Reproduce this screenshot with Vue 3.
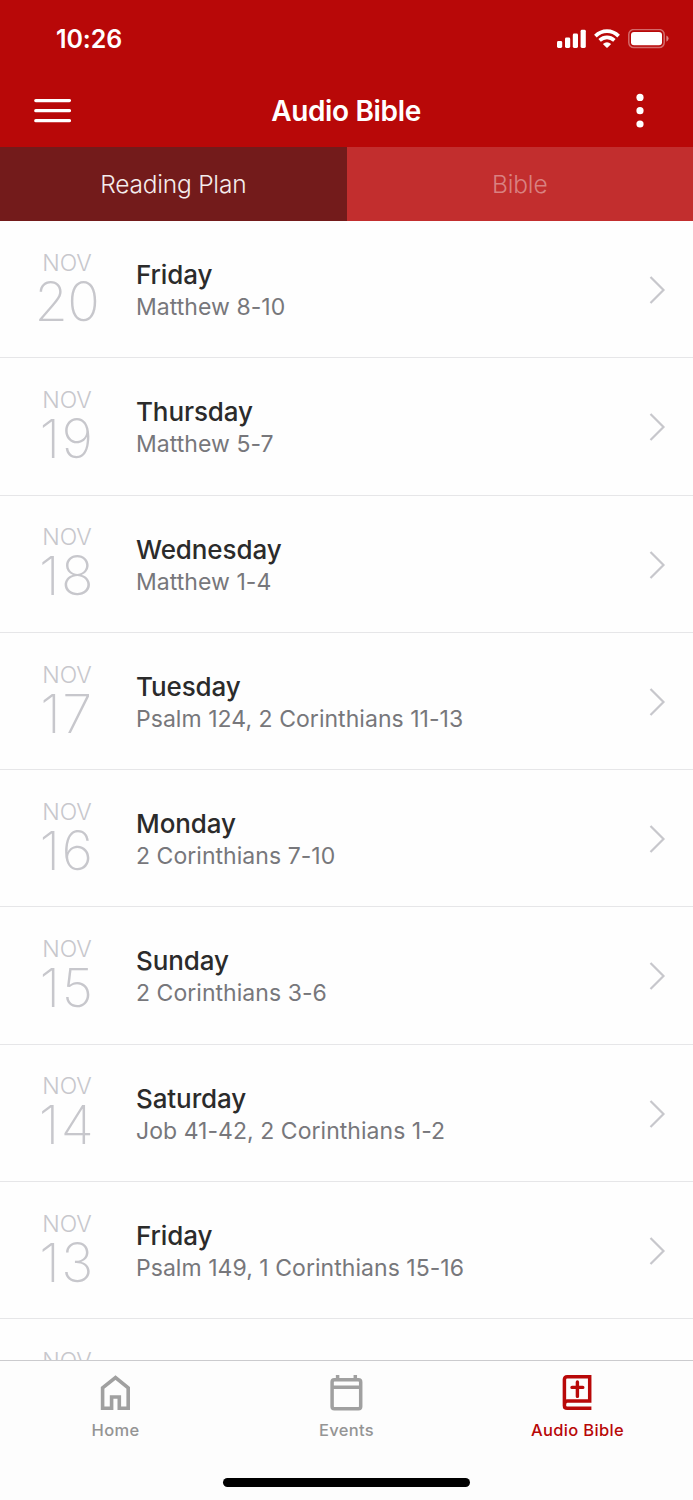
<template>
  <div class="screen">
    <header class="header">
      <div class="status-bar">
        <span class="time">10:26</span>
        <div class="status-icons">
          <svg class="signal" width="30" height="20" viewBox="0 0 30 20" fill="#fff">
            <rect x="0" y="12" width="5.2" height="7" rx="1.4" />
            <rect x="8" y="8.6" width="5.2" height="10.4" rx="1.4" />
            <rect x="15.8" y="4.6" width="5.2" height="14.4" rx="1.4" />
            <rect x="23.6" y="0.8" width="5.2" height="18.2" rx="1.4" />
          </svg>
          <svg class="wifi" width="26" height="20" viewBox="0 0 26 20" fill="none" stroke="#fff" stroke-width="3.7">
            <path d="M1.4 7.1Q6.4 2.1 13 2.1T24.6 7.1" />
            <path d="M5.6 11.4Q9 8.4 13 8.4T20.4 11.4" />
            <path d="M8.9 15Q13 11.4 17.1 15L13.6 18.4Q13 19 12.4 18.4Z" fill="#fff" stroke="none" />
          </svg>
          <svg class="battery" width="41" height="20" viewBox="0 0 41 20" fill="none">
            <rect x="0.8" y="0.6" width="35.4" height="18" rx="5" stroke="#fff" stroke-opacity=".4" stroke-width="1.5" />
            <rect x="3" y="3" width="31" height="13.2" rx="3" fill="#fff" />
            <path d="M38.4 6.5Q40.6 7.5 40.6 9.6T38.4 12.7Z" fill="#fff" fill-opacity=".5" />
          </svg>
        </div>
      </div>
      <div class="nav-bar">
        <button class="icon-button" aria-label="Menu">
          <svg width="37" height="26" viewBox="0 0 37 26" stroke="#fff" stroke-width="3.3" stroke-linecap="round">
            <path d="M1.8 2.6H35.4M1.8 12.7H35.4M1.8 22.7H35.4" />
          </svg>
        </button>
        <h1 class="title">Audio Bible</h1>
        <button class="icon-button" aria-label="More">
          <svg width="38" height="36" viewBox="0 0 38 36" fill="#fff">
            <circle cx="19" cy="4.4" r="3.6" />
            <circle cx="19" cy="17.7" r="3.6" />
            <circle cx="19" cy="31" r="3.6" />
          </svg>
        </button>
      </div>
    </header>

    <div class="segments">
      <button class="segment active">Reading Plan</button>
      <button class="segment">Bible</button>
    </div>

    <main class="list">
      <div class="row" v-for="item in readings" :key="item.date">
        <div class="date">
          <span class="month">NOV</span>
          <span class="day" :class="{ teen: item.date < 20 }">{{ item.date }}</span>
        </div>
        <div class="info">
          <div class="weekday">{{ item.weekday }}</div>
          <div class="passage">{{ item.passage }}</div>
        </div>
        <svg class="chevron" width="18" height="30" viewBox="0 0 18 30" fill="none" stroke="#c7c7cc" stroke-width="2.2">
          <path d="M2.5 2L15.5 15L2.5 28" />
        </svg>
      </div>
    </main>

    <footer class="footer">
      <nav class="tab-bar">
        <a class="tab">
          <svg width="37" height="38" viewBox="0 0 37 38" fill="none" stroke="#a0a0a0" stroke-width="3.6">
            <path d="M5.6 35.2V14.9L18.5 4.6L31.2 14.9V35.2H22.3V24H14.6V35.2Z" />
          </svg>
          <span>Home</span>
        </a>
        <a class="tab">
          <svg width="37" height="38" viewBox="0 0 37 38" fill="none" stroke="#a0a0a0" stroke-width="3.5">
            <rect x="4.1" y="6.8" width="28.6" height="29" rx="2.2" />
            <path d="M4.1 14.2H32.7M9.6 2V6.5M27.3 2V6.5" />
          </svg>
          <span>Events</span>
        </a>
        <a class="tab active">
          <svg width="37" height="38" viewBox="0 0 37 38" fill="none" stroke="#b80808" stroke-width="3.5">
            <path d="M32.4 35.3H8.2Q5.4 35.3 5.4 32.4V6.6Q5.4 3.8 8.2 3.8H30.7V28.1H8.4Q5.4 28.1 5.4 31.9" />
            <path d="M18.4 9V23.4M13 14.4H23.8" stroke-width="3.4" stroke-linecap="round" />
          </svg>
          <span>Audio Bible</span>
        </a>
      </nav>
      <div class="home-indicator"></div>
    </footer>
  </div>
</template>

<script setup>
const readings = [
  { date: 20, weekday: 'Friday', passage: 'Matthew 8-10' },
  { date: 19, weekday: 'Thursday', passage: 'Matthew 5-7' },
  { date: 18, weekday: 'Wednesday', passage: 'Matthew 1-4' },
  { date: 17, weekday: 'Tuesday', passage: 'Psalm 124, 2 Corinthians 11-13' },
  { date: 16, weekday: 'Monday', passage: '2 Corinthians 7-10' },
  { date: 15, weekday: 'Sunday', passage: '2 Corinthians 3-6' },
  { date: 14, weekday: 'Saturday', passage: 'Job 41-42, 2 Corinthians 1-2' },
  { date: 13, weekday: 'Friday', passage: 'Psalm 149, 1 Corinthians 15-16' },
  { date: 12, weekday: 'Thursday', passage: '1 Corinthians 12-14' }
]
</script>

<style>
body {
  margin: 0;
}
</style>

<style scoped>
.screen {
  display: flex;
  flex-direction: column;
  height: 1500px;
  overflow: hidden;
  background-color: #fefefe;
  font-family: Inter, 'Liberation Sans', sans-serif;
}

button {
  padding: 0;
  border: 0;
  background: none;
  font: inherit;
}

svg {
  display: block;
  flex: none;
}

.header {
  flex: none;
  height: 147px;
  background-color: #b80808;
  color: #fff;
}

.status-bar {
  display: flex;
  justify-content: space-between;
  align-items: center;
  height: 78px;
  padding: 0 24px 0 56px;
}

.time {
  font-size: 25px;
  font-weight: 600;
  letter-spacing: -0.1px;
}

.status-icons {
  display: flex;
  align-items: center;
}

.wifi {
  margin-left: 7px;
}

.battery {
  margin-left: 8px;
}

.nav-bar {
  display: flex;
  justify-content: space-between;
  align-items: center;
  height: 66px;
  padding: 0 34px;
}

.title {
  margin: 0;
  font-size: 28px;
  font-weight: 600;
  letter-spacing: -0.35px;
}

.segments {
  display: flex;
  flex: none;
  height: 74px;
}

.segment {
  flex: 1;
  background-color: #c22e2e;
  color: #d98181;
  font-size: 24.5px;
  font-weight: 300;
  letter-spacing: -0.2px;
}

.segment.active {
  background-color: #731b1b;
  color: #f5eded;
}

.list {
  flex: 1;
  min-height: 0;
  overflow: hidden;
}

.row {
  display: flex;
  align-items: center;
  box-sizing: border-box;
  height: 137.25px;
  padding: 2px 27px 0 0;
  border-bottom: 1.5px solid #e6e6e8;
}

.date {
  display: flex;
  flex-direction: column;
  align-items: center;
  width: 134px;
  padding-bottom: 4.5px;
  color: #c7c7cc;
}

.month {
  font-size: 23px;
  font-weight: 300;
  line-height: 28px;
}

.day {
  font-size: 54px;
  font-weight: 150;
  line-height: 50px;
  letter-spacing: -0.5px;
}

.day.teen {
  letter-spacing: 1.5px;
}

.info {
  flex: 1;
  padding: 2px 0 0 2px;
}

.weekday {
  color: #2b2b2b;
  font-size: 26px;
  font-weight: 500;
  line-height: 32px;
  letter-spacing: -0.1px;
}

.passage {
  color: #77777b;
  font-size: 23px;
  line-height: 32px;
  letter-spacing: 0.04px;
}

.footer {
  display: flex;
  flex: none;
  flex-direction: column;
  align-items: center;
  justify-content: space-between;
  box-sizing: border-box;
  height: 140px;
  padding: 12px 0 13px;
  border-top: 1px solid #cbcbce;
  background-color: #fdfdfd;
}

.tab-bar {
  display: flex;
  width: 100%;
}

.tab {
  display: flex;
  flex: 1;
  flex-direction: column;
  align-items: center;
  color: #949494;
  font-size: 16.5px;
  font-weight: 500;
  line-height: 20px;
  letter-spacing: 0.35px;
}

.tab span {
  margin-top: 9px;
}

.tab.active {
  color: #b80808;
}

.home-indicator {
  width: 247px;
  height: 9px;
  border-radius: 5px;
  background-color: #000;
}
</style>
